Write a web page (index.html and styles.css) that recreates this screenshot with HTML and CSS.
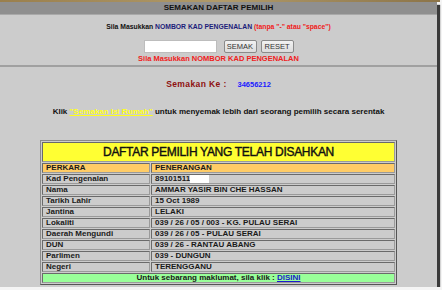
FILE: index.html
```html
<!DOCTYPE html>
<html lang="ms">
<head>
  <meta charset="UTF-8" />
  <title>Semakan Daftar Pemilih</title>
  <link rel="stylesheet" href="styles.css">
</head>
<body>
  <div class="wood"></div>
  <div class="panel">
    <div class="head">SEMAKAN DAFTAR PEMILIH</div>

    <form class="search" onsubmit="return false">
      <p class="hint">Sila Masukkan <span class="navy">NOMBOR KAD PENGENALAN</span> <span class="red">(tanpa "-" atau "space")</span></p>
      <div class="fields">
        <input type="text" class="ic" />
        <button type="submit">SEMAK</button>
        <button type="reset">RESET</button>
      </div>
      <p class="warn">Sila Masukkan NOMBOR KAD PENGENALAN</p>
    </form>

    <div class="sep"></div>

    <p class="count">Semakan Ke : <span class="num">34656212</span></p>

    <p class="klik">Klik <a href="#">"Semakan Isi Rumah"</a> untuk menyemak lebih dari seorang pemilih secara serentak</p>

    <table class="result">
      <tr><td colspan="2" class="title">DAFTAR PEMILIH YANG TELAH DISAHKAN</td></tr>
      <tr class="thead"><td class="key">PERKARA</td><td>PENERANGAN</td></tr>
      <tr><td class="key">Kad Pengenalan</td><td>89101511<span class="mask"></span></td></tr>
      <tr><td class="key">Nama</td><td>AMMAR YASIR BIN CHE HASSAN</td></tr>
      <tr><td class="key">Tarikh Lahir</td><td>15 Oct 1989</td></tr>
      <tr><td class="key">Jantina</td><td>LELAKI</td></tr>
      <tr><td class="key">Lokaliti</td><td>039 / 26 / 05 / 003 - KG. PULAU SERAI</td></tr>
      <tr><td class="key">Daerah Mengundi</td><td>039 / 26 / 05 - PULAU SERAI</td></tr>
      <tr><td class="key">DUN</td><td>039 / 26 - RANTAU ABANG</td></tr>
      <tr><td class="key">Parlimen</td><td>039 - DUNGUN</td></tr>
      <tr><td class="key">Negeri</td><td>TERENGGANU</td></tr>
      <tr><td colspan="2" class="foot">Untuk sebarang maklumat, sila klik : <a href="#">DISINI</a></td></tr>
    </table>
  </div>
</body>
</html>
```

FILE: styles.css
```css
body {
  margin: 0;
  background: #f4f4f4;
  font-family: 'Liberation Sans', Arial, sans-serif;
  font-size: 8px;
  font-weight: bold;
  color: #111;
}

.wood {
  height: 2px;
  width: 440px;
  background: linear-gradient(to right, #9a7f4c, #b09a6a, #8c7448);
}

.panel {
  width: 437px;
  background: #cccccc;
  padding-bottom: 2px;
  box-shadow: 3px 3px 1px #3a3a3a;
}

.head {
  height: 12px;
  line-height: 12px;
  background: #8f8f8f;
  border-bottom: 1px solid #a9a9a9;
  text-align: center;
  color: #111;
}

p {
  margin: 0;
  line-height: 10px;
  text-align: center;
}

.hint {
  margin-top: 7px;
  font-size: 6.8px;
}

.navy {
  color: #1c1c7a;
}

.red {
  color: #f02020;
}

.fields {
  margin-top: 8px;
  display: flex;
  justify-content: center;
  height: 13px;
}

.ic {
  width: 73px;
  height: 13px;
  box-sizing: border-box;
  border: 1px solid #bdbdbd;
  background: #fff;
  margin: 0 7px 0 0;
  padding: 0;
}

.fields button {
  width: 33px;
  height: 13px;
  box-sizing: border-box;
  margin: 0 4px 0 0;
  padding: 0;
  font-family: 'Liberation Sans', Arial, sans-serif;
  font-size: 7.5px;
  font-weight: normal;
  color: #333;
  background: linear-gradient(#f2f2f2, #dcdcdc);
  border: 1px solid #8a8a8a;
  border-radius: 2px;
}

.fields button:last-child {
  margin-right: 0;
}

.warn {
  margin-top: 1px;
  font-size: 7.5px;
  color: #f02020;
}

.sep {
  margin-top: 1px;
  height: 2px;
  background: #a0a0a0;
}

.count {
  margin-top: 12px;
  font-size: 8.5px;
  letter-spacing: 0.4px;
  color: #8e1010;
}

.count .num {
  font-size: 7.5px;
  letter-spacing: 0;
  color: #1a1aff;
  margin-left: 8px;
}

.klik {
  margin-top: 17px;
}

.klik a {
  color: #ffff1a;
}

.result {
  margin: 23px auto 0;
  width: 357px;
  border: 1px solid #8a8a8a;
  border-right-color: #555;
  border-bottom-color: #555;
  border-spacing: 1px;
}

.result td {
  height: 8px;
  line-height: 8px;
  padding: 0 0 0 3px;
  border: 1px solid #6a6a6a;
  border-right-color: #9a9a9a;
  border-bottom-color: #9a9a9a;
  color: #1a1a1a;
  white-space: nowrap;
}

.result td.key {
  width: 103px;
}

.result td.title {
  height: 18px;
  line-height: 18px;
  background: #ffff33;
  text-align: center;
  font-size: 12px;
  font-weight: normal;
  -webkit-text-stroke: 0.4px #111;
  letter-spacing: -0.3px;
  color: #111;
  padding: 0;
}

.thead td {
  background: #ffcc66;
}

.mask {
  display: inline-block;
  width: 19px;
  height: 8px;
  background: #fff;
  vertical-align: top;
}

.result td.foot {
  background: #99ff99;
  text-align: center;
  padding: 0;
}

.foot a {
  color: #1a1acc;
}
```
